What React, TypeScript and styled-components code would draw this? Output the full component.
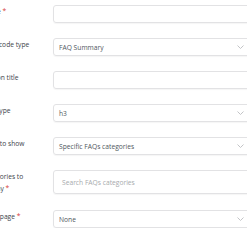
import React from 'react';
import styled, { createGlobalStyle } from 'styled-components';

const GlobalStyle = createGlobalStyle`
    html, body {
        margin: 0;
        padding: 0;
        background: #fff;
        overflow: hidden;
    }
    body {
        font-family: 'Open Sans', 'Liberation Sans', sans-serif;
        font-size: 6.7px;
    }
`

const Form = styled.div`
    width: 269px;
    margin-left: -18px;
    padding-top: 5px;
    display: flex;
    flex-direction: column;
    gap: 15px;
`

const Row = styled.div`
    display: grid;
    grid-template-columns: 71px 198px;
    align-items: start;
`

const Label = styled.label`
    padding-top: 1px;
    padding-right: 10px;
    line-height: 12px;
    color: #3c434a;
    .req{
        color: #d63638;
    }
`

const Field = styled.div<{ $tall?: boolean }>`
    position: relative;
    box-sizing: border-box;
    height: ${p => p.$tall ? '24px' : '18px'};
    border: 1px solid #e2e2e4;
    border-radius: 3px;
    box-shadow: 0 1px 1px rgba(0, 0, 0, 0.04);
    display: flex;
    align-items: center;
    padding-left: ${p => p.$tall ? '8px' : '5px'};
    color: #50575e;
`

const Placeholder = styled.span`
    color: #a7aaad;
`

const Chevron = styled.svg`
    position: absolute;
    right: 6px;
    top: 50%;
    margin-top: -2px;
`

function Arrow() {
    return (
        <Chevron width="7" height="4" viewBox="0 0 7 4">
            <polyline points="0.5,0.5 3.5,3.5 6.5,0.5" fill="none" stroke="#c3c4c7" strokeWidth="1" />
        </Chevron>
    );
}

export default function App() {
    return (
        <>
            <GlobalStyle />
            <Form>
                <Row>
                    <Label>Name <span className="req">*</span></Label>
                    <Field />
                </Row>
                <Row>
                    <Label>Shortcode type</Label>
                    <Field>FAQ Summary<Arrow /></Field>
                </Row>
                <Row>
                    <Label>Section title</Label>
                    <Field />
                </Row>
                <Row>
                    <Label>Title type</Label>
                    <Field>h3<Arrow /></Field>
                </Row>
                <Row>
                    <Label>FAQs to show</Label>
                    <Field>Specific FAQs categories<Arrow /></Field>
                </Row>
                <Row>
                    <Label>Categories to display <span className="req">*</span></Label>
                    <Field $tall><Placeholder>Search FAQs categories</Placeholder></Field>
                </Row>
                <Row>
                    <Label>FAQs page <span className="req">*</span></Label>
                    <Field>None<Arrow /></Field>
                </Row>
            </Form>
        </>
    );
}
